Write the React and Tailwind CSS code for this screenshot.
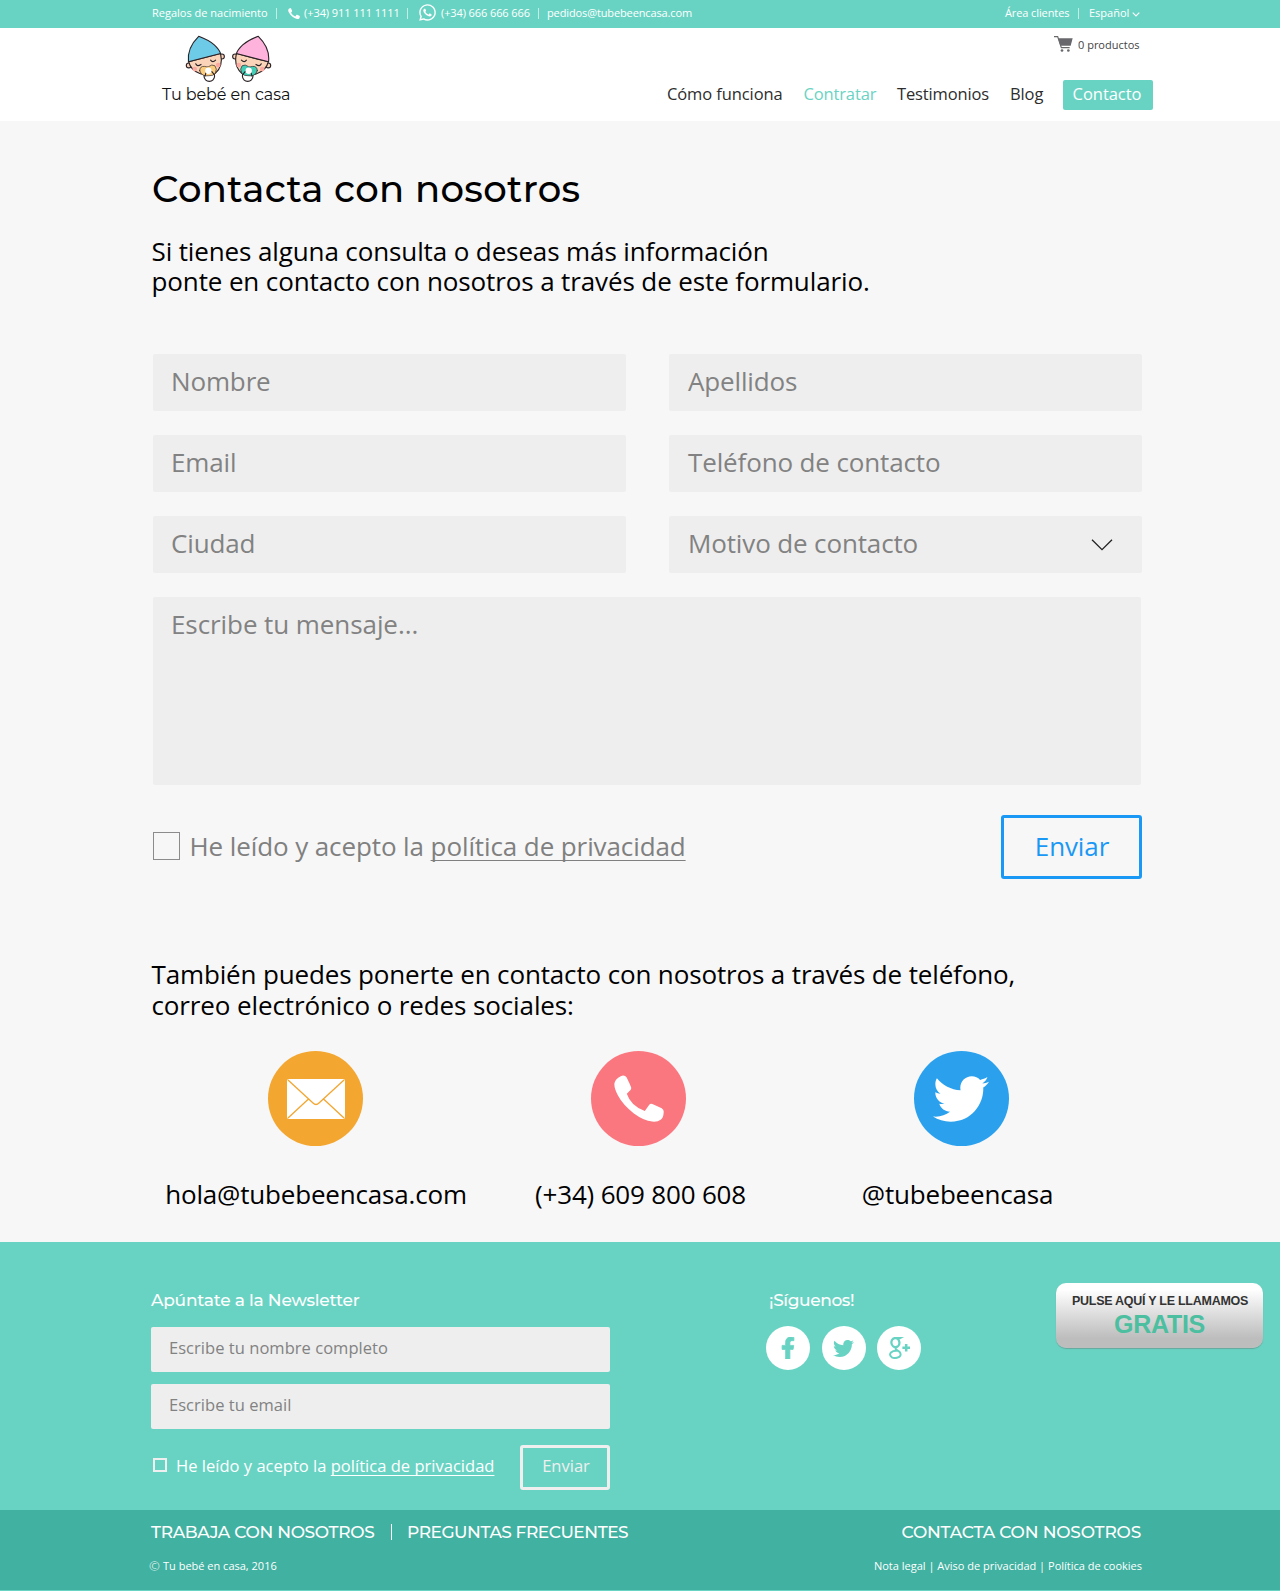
import React from "react";
import { FaWhatsapp, FaTwitter, FaFacebookF } from "react-icons/fa";

const HANDSET =
  "M6.8 1Q10.5-.8 12.6 2.2Q15.5 8 17.2 12.2Q17.6 14 16.6 15L12.9 18.7Q14.5 24 19.3 29Q24.5 34 31 36L35.3 30Q36.5 28.3 38.6 29L48 33.2Q50.2 34.5 50 37Q49.8 42.5 47.3 44.6Q44 47.2 38.5 46.7Q30 45.8 20 38.5Q9 30 4 20.5Q0 13 .4 8.5Q1 4 6.8 1Z";

function Handset({ className }) {
  return (
    <svg viewBox="0 0 50.3 47" className={className} fill="currentColor">
      <path d={HANDSET} />
    </svg>
  );
}

function Baby({ hat, pacifier }) {
  return (
    <g stroke="#2b2226" strokeWidth="3.4" strokeLinejoin="round" strokeLinecap="round">
      <circle cx="145" cy="198" r="7.5" fill="#fbd3b8" />
      <circle cx="245" cy="171" r="7.5" fill="#fbd3b8" />
      <path d="M145 187Q150 212 180 223Q200 230 225 222Q250 200 241 162Z" fill="#fbd3b8" />
      <g fill="#fba9a0" stroke="none">
        <circle cx="163" cy="209" r="7" />
        <circle cx="234" cy="197" r="7" />
      </g>
      <path d="M175 110Q205 121 222 136Q237 150 241 162L144 187Q139 145 175 110Z" fill={hat} />
      <path d="M166 193Q170 203 182 195M211 182Q217 191 226 182" fill="none" />
      <circle cx="207" cy="230" r="16" fill="#fff" />
      <path d="M178 214Q178 199 193 201Q201 203 204 202Q215 193 224 199Q232 208 225 222Q218 230 206 229Q184 233 178 214Z" fill={pacifier} strokeWidth="2" />
      <path d="M194 230L197 220M222 226L214 216" />
      <circle cx="204" cy="214" r="9.5" fill="#fff" stroke="none" />
    </g>
  );
}

function BabiesLogo() {
  return (
    <svg viewBox="134 106 262 142" className="h-[47px] w-[87px]">
      <Baby hat="#6dcbe8" pacifier="#fbcd7c" />
      <g transform="translate(530 0) scale(-1 1)">
        <Baby hat="#fdb3dc" pacifier="#43cdb6" />
      </g>
    </svg>
  );
}

function Cart() {
  return (
    <svg viewBox="0 0 57 48" className="h-4 w-[19px]" fill="none" stroke="#68686c" strokeWidth="3.5">
      <path d="M0 2H11L22 35H47" />
      <path d="M12 7H56L50 29H19Z" fill="#68686c" stroke="none" />
      <g fill="#68686c" stroke="none">
        <circle cx="24" cy="43.5" r="4" />
        <circle cx="43" cy="43.5" r="4" />
      </g>
    </svg>
  );
}

function GooglePlus() {
  return (
    <svg viewBox="0 0 21 22" className="h-[22px] w-[21px]" fill="none" stroke="currentColor">
      <ellipse cx="6.4" cy="5.6" rx="4" ry="4.6" strokeWidth="2.3" transform="rotate(-8 6.4 5.6)" />
      <path d="M6 .7H12.8L11 1.7H8" strokeWidth="1.2" />
      <path d="M8.6 9.2Q5.6 11.4 7.2 12.6L10.4 14.8Q13 17.6 10.2 19.9Q6.6 22 2.8 20.3Q-.2 18 2 15.4Q4 13.6 8.2 13.8" strokeWidth="2" />
      <path d="M17.2 7V14.6M13.4 10.8H21" strokeWidth="2.5" />
    </svg>
  );
}

function Field({ children, chevron }) {
  return (
    <div className="flex h-[57px] justify-between rounded-[2px] bg-[#eeeeee] pl-[18px] pr-[29px] text-[26px] leading-[55px] text-[#828282]">
      <span className="whitespace-nowrap tracking-[-0.14px]">{children}</span>
      {chevron && (
        <svg viewBox="0 0 22 12" className="mt-[23px] h-3 w-[22px]" fill="none" stroke="#222" strokeWidth="1.3">
          <path d="M1 .8L11 10.6L21 .8" />
        </svg>
      )}
    </div>
  );
}

function Separator() {
  return <span className="h-[11px] w-px bg-white/60" />;
}

function Contact({ color, icon, children, className }) {
  return (
    <div className="flex w-[323px] flex-col items-center">
      <div className={"flex h-[95px] w-[95px] items-center justify-center rounded-full text-white " + color}>{icon}</div>
      <div className={"mt-[30px] whitespace-nowrap leading-9 " + className}>{children}</div>
    </div>
  );
}

function Social({ children }) {
  return <div className="flex h-11 w-11 items-center justify-center rounded-full bg-white text-[#69d3c3]">{children}</div>;
}

export default function App() {
  return (
    <div className="w-[1280px] bg-[#f7f7f7] font-['Open_Sans',sans-serif] text-black">
      <div className="flex h-7 items-start bg-[#69d3c3] pl-[152px] text-[11px] leading-[26px] whitespace-nowrap text-white">
        <div className="flex h-[26px] grow items-center">
          <span className="w-[124px]">Regalos de nacimiento</span>
          <Separator />
          <Handset className="ml-[11px] h-[11px] w-[12px]" />
          <span className="ml-[4px] w-[103px] tracking-[-0.06px]">(+34) 911 111 1111</span>
          <Separator />
          <FaWhatsapp className="ml-[10px] -mt-px h-[19px] w-[19px]" />
          <span className="ml-[4px] w-[97px] tracking-[-0.1px]">(+34) 666 666 666</span>
          <Separator />
          <span className="ml-[8px] tracking-[-0.12px]">pedidos@tubebeencasa.com</span>
        </div>
        <div className="flex h-[26px] w-[275px] items-center">
          <span className="w-[73px] tracking-[-0.1px]">Área clientes</span>
          <Separator />
          <span className="ml-[10px] w-[43px]">Español</span>
          <svg viewBox="0 0 8 5" className="mt-[3px] h-[5px] w-2" fill="none" stroke="#fff" strokeWidth="1.1">
            <path d="M.7 .7L4 4L7.3 .7" />
          </svg>
        </div>
      </div>

      <header className="flex h-[93px] bg-white pl-[162px]">
        <div className="flex w-[505px] flex-col pt-[7px]">
          <div className="pl-[23px]">
            <BabiesLogo />
          </div>
          <span className="mt-[3px] font-[Montserrat,Inter,sans-serif] text-[16px] leading-5 tracking-[-0.08px] text-[#111]">Tu bebé en casa</span>
        </div>
        <div className="w-[486px]">
          <div className="flex items-start justify-end pt-[8px] pr-[13px]">
            <Cart />
            <span className="mt-px ml-[5px] w-[62px] whitespace-nowrap text-[11px] leading-4 text-[#444]">0 productos</span>
          </div>
          <nav className="mt-[27px] flex text-[16.5px] leading-[27px] whitespace-nowrap text-[#2d2d2d]">
            <span className="w-[136.5px] tracking-[-0.1px]">Cómo funciona</span>
            <span className="w-[93.5px] tracking-[-0.14px] text-[#69d3c3]">Contratar</span>
            <span className="w-[113px] tracking-[-0.15px]">Testimonios</span>
            <span className="w-[53px] tracking-[-0.1px]">Blog</span>
            <span className="h-[30px] w-[90px] rounded-[2px] bg-[#69d3c3] pr-[2px] text-center tracking-[-0.05px] text-white">Contacto</span>
          </nav>
        </div>
      </header>

      <main className="ml-[151px] w-[991px] pt-11 pb-[30px]">
        <h1 className="ml-px font-[Montserrat,Inter,sans-serif] text-[37px] leading-[48px] font-medium tracking-[0.34px] whitespace-nowrap">Contacta con nosotros</h1>
        <p className="mt-6 ml-[0.5px] text-[26px] leading-[29.5px] tracking-[-0.12px] whitespace-nowrap">
          Si tienes alguna consulta o deseas más información
          <br />
          ponte en contacto con nosotros a través de este formulario.
        </p>

        <form className="mt-[58px] pl-[2px]">
          <div className="grid grid-cols-[473px_473px] gap-x-[43px] gap-y-6">
            <Field>Nombre</Field>
            <Field>
              <span className="ml-px">Apellidos</span>
            </Field>
            <Field>Email</Field>
            <Field>
              <span className="ml-px">Teléfono de contacto</span>
            </Field>
            <Field>Ciudad</Field>
            <Field chevron>
              <span className="ml-px">Motivo de contacto</span>
            </Field>
          </div>
          <div className="mt-6 h-[188px] w-[988px] rounded-[2px] bg-[#eeeeee] pl-[18px] text-[26px] leading-[55px] tracking-[-0.08px] text-[#828282]">Escribe tu mensaje...</div>
          <div className="mt-[30px] flex h-16 text-[26px] leading-[62px] text-[#808080]">
            <span className="mt-[17px] h-7 w-[27px] border border-[#8c8c8c]" />
            <span className="ml-[9.5px] whitespace-nowrap tracking-[-0.1px]">
              He leído y acepto la <a className="underline decoration-1 underline-offset-[4px] [text-decoration-skip-ink:none]">política de privacidad</a>
            </span>
            <span className="ml-auto h-16 w-[141px] rounded-[3px] border-3 border-[#1a98f5] pl-px text-center leading-[56px] tracking-[-0.1px] text-[#1a98f5]">Enviar</span>
          </div>
        </form>

        <p className="mt-20 ml-[0.5px] text-[26px] leading-[31px] tracking-[-0.145px] whitespace-nowrap">
          También puedes ponerte en contacto con nosotros a través de teléfono,
          <br />
          <span className="tracking-[-0.12px]">correo electrónico o redes sociales:</span>
        </p>
        <div className="mt-[30px] ml-[3px] flex text-[26px] tracking-[-0.18px]">
          <Contact
            color="bg-[#f3a630]"
            className="pl-px"
            icon={
              <svg viewBox="0 0 58 40" className="h-10 w-[58px]">
                <rect width="58" height="40" rx="2" fill="#fff" />
                <path d="M1 1L26 24Q29 27 32 24L57 1M1 39L21.5 20M57 39L36.5 20" fill="none" stroke="#f3a630" strokeWidth="1.3" />
              </svg>
            }
          >
            hola@tubebeencasa.com
          </Contact>
          <Contact color="bg-[#fb7780]" className="pl-[4px]" icon={<Handset className="h-[47px] w-[50px]" />}>
            (+34) 609 800 608
          </Contact>
          <Contact color="mr-px bg-[#2ba1ee]" className="pr-[8px]" icon={<FaTwitter className="h-[56px] w-[56px]" />}>
            @tubebeencasa
          </Contact>
        </div>
      </main>

      <footer>
        <div className="flex h-[268px] bg-[#69d3c3] pl-[151px] whitespace-nowrap text-white">
          <div className="w-[459px] pt-[46px]">
            <h2 className="font-[Montserrat,Inter,sans-serif] text-[17px] leading-6 font-medium tracking-[-0.22px]">Apúntate a la Newsletter</h2>
            <div className="mt-[15px] flex flex-col gap-3 text-[16.5px] leading-[41px] tracking-[0.04px] text-[#828282]">
              <div className="h-[45px] rounded-[2px] bg-[#eeeeee] pl-[18px]">Escribe tu nombre completo</div>
              <div className="h-[45px] rounded-[2px] bg-[#eeeeee] pl-[18px]">Escribe tu email</div>
            </div>
            <div className="mt-4 flex h-[45px] text-[16.5px] leading-[42px] tracking-[0.02px]">
              <span className="mt-[13px] ml-[2px] h-[14px] w-[14px] border-2 border-[#efefef]" />
              <span className="ml-[9px]">
                He leído y acepto la <a className="underline decoration-1 underline-offset-[3px] [text-decoration-skip-ink:none]">política de privacidad</a>
              </span>
              <span className="ml-auto h-[45px] w-[90px] rounded-[3px] border-3 border-[#efefef] pl-[2px] text-center leading-[36px] text-[#efefef]">Enviar</span>
            </div>
          </div>
          <div className="ml-[156px] w-[156px] pt-[46px]">
            <h2 className="pl-[3px] font-[Montserrat,Inter,sans-serif] text-[17px] leading-6 font-medium tracking-[-0.38px]">¡Síguenos!</h2>
            <div className="mt-[14px] flex gap-[11.5px]">
              <Social>
                <FaFacebookF className="h-[22px] w-[22px]" stroke="currentColor" strokeWidth="18" />
              </Social>
              <Social>
                <FaTwitter className="h-[21px] w-[21px]" />
              </Social>
              <Social>
                <GooglePlus />
              </Social>
            </div>
          </div>
          <div className="mt-[41px] ml-[134px] flex h-[65px] w-[207px] flex-col items-center rounded-[10px] bg-linear-to-b from-white from-10% to-[#bdbdbd] to-85% pt-[10px] font-['Liberation_Sans',Arial,sans-serif] font-bold shadow-[0_1px_1px_rgba(100,100,100,0.4)]">
            <span className="pl-px text-[12.5px] leading-[17px] tracking-[-0.26px] text-[#333]">PULSE AQUÍ Y LE LLAMAMOS</span>
            <span className="text-[25px] leading-[28px] tracking-[-0.25px] text-[#4bbf9f]">GRATIS</span>
          </div>
        </div>
        <div className="h-[81px] border-b border-[#69d3c3] bg-[#41b1a1] pt-[10px] pr-[138px] pl-[150px] whitespace-nowrap text-white">
          <div className="flex justify-between font-[Montserrat,Inter,sans-serif] text-[17px] leading-6 font-medium">
            <div className="flex items-center">
              <span className="w-[241px] pl-px tracking-[-0.32px]">TRABAJA CON NOSOTROS</span>
              <span className="h-4 w-px bg-white" />
              <span className="ml-[15px] tracking-[-0.46px]">PREGUNTAS FRECUENTES</span>
            </div>
            <span className="pr-px tracking-[-0.2px]">CONTACTA CON NOSOTROS</span>
          </div>
          <div className="mt-3 flex justify-between text-[11px] leading-5">
            <div className="-ml-px flex">
              <span className="w-[14px] text-[13px] font-light">©</span>
              <span>Tu bebé en casa, 2016</span>
            </div>
            <span>Nota legal | Aviso de privacidad | Política de cookies</span>
          </div>
        </div>
      </footer>
    </div>
  );
}
